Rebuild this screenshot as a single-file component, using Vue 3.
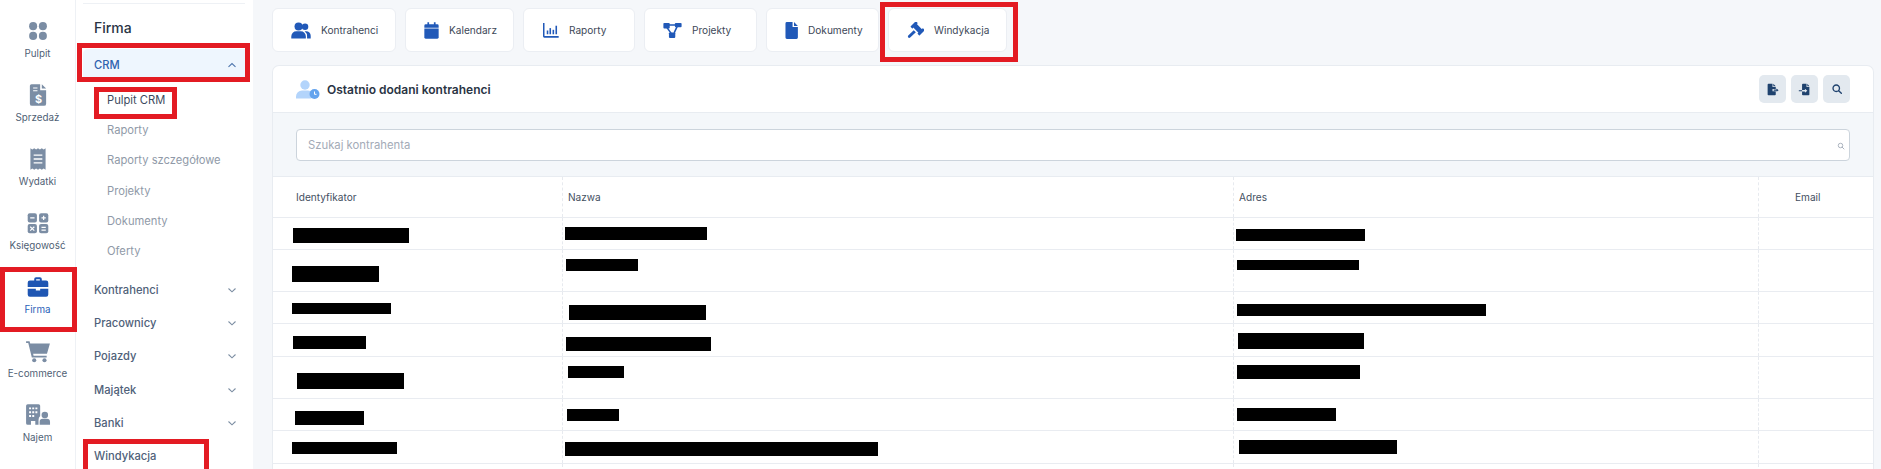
<script setup>
const railItems = [
  { label: 'Pulpit', icon: 'grid' },
  { label: 'Sprzedaż', icon: 'invoice' },
  { label: 'Wydatki', icon: 'receipt' },
  { label: 'Księgowość', icon: 'calc' },
  { label: 'Firma', icon: 'case', active: true },
  { label: 'E-commerce', icon: 'cart' },
  { label: 'Najem', icon: 'building' },
]
const subLinks = ['Pulpit CRM', 'Raporty', 'Raporty szczegółowe', 'Projekty', 'Dokumenty', 'Oferty']
const menu = ['Kontrahenci', 'Pracownicy', 'Pojazdy', 'Majątek', 'Banki']
const tabs = [
  { label: 'Kontrahenci', icon: 'people', w: 124, iw: 20, ih: 17, vb: '0 1 24 21' },
  { label: 'Kalendarz', icon: 'calendar', w: 109, iw: 15, ih: 17, vb: '1 0 22 24' },
  { label: 'Raporty', icon: 'chart', w: 112, iw: 17, ih: 15, vb: '0 1 24 22' },
  { label: 'Projekty', icon: 'nodes', w: 113, iw: 19, ih: 16, vb: '0 2 24 20' },
  { label: 'Dokumenty', icon: 'doc', w: 113, iw: 13, ih: 17, vb: '3 0 18 24' },
  { label: 'Windykacja', icon: 'gavel', w: 119, iw: 17, ih: 17, vb: '0 0 24 24' },
]
const colStarts = [273, 563, 1234]
const rowHeights = [32, 42, 32, 33, 42, 32, 33]
// redaction blocks: [x1, y1, x2, y2] in each column, per row
const blocks = [
  [[293, 228, 409, 243], [565, 227, 707, 240], [1236, 229, 1365, 241]],
  [[292, 266, 379, 282], [566, 259, 638, 271], [1237, 260, 1359, 270]],
  [[292, 303, 391, 314], [569, 305, 706, 320], [1237, 304, 1486, 316]],
  [[293, 336, 366, 349], [566, 337, 711, 351], [1238, 333, 1364, 349]],
  [[297, 373, 404, 389], [568, 366, 624, 378], [1237, 365, 1360, 379]],
  [[295, 411, 364, 425], [567, 409, 619, 421], [1237, 408, 1336, 421]],
  [[292, 442, 397, 454], [565, 442, 878, 456], [1239, 440, 1397, 454]],
]
let top = 218
const rows = rowHeights.map((h, r) => {
  const rowTop = top
  top += h
  return {
    h,
    cells: blocks[r].map((b, c) => ({
      left: b[0] - colStarts[c] + 'px',
      top: b[1] - rowTop + 'px',
      width: b[2] - b[0] + 'px',
      height: b[3] - b[1] + 'px',
    })),
  }
})
</script>

<template>
  <div class="app">
    <nav class="rail">
      <a v-for="item in railItems" :key="item.label" class="rail-item" :class="{ active: item.active }">
        <svg class="rail-icon" viewBox="0 0 24 24" fill="currentColor">
          <template v-if="item.icon === 'grid'">
            <circle cx="7.5" cy="7.5" r="3.7" /><circle cx="16.5" cy="7.5" r="3.7" />
            <circle cx="7.5" cy="16.5" r="3.7" /><circle cx="16.5" cy="16.5" r="3.7" />
          </template>
          <template v-else-if="item.icon === 'invoice'">
            <path d="M7 2h7v5.500h5.500V20a2 2 0 0 1-2 2h-11a2 2 0 0 1-2-2V3.500A1.500 1.500 0 0 1 6 2z" />
            <path d="M15.500 2l4 4h-4z" />
            <path d="M7.500 5.500h4M7.500 8h4" stroke="#fff" stroke-width="1" />
            <text x="12.500" y="19" font-size="10" font-weight="700" text-anchor="middle" fill="#fff" font-family="Inter, sans-serif">$</text>
          </template>
          <template v-else-if="item.icon === 'receipt'">
            <path d="M5 2l1.750 1.200 1.750-1.200 1.750 1.200 1.750-1.200 1.750 1.200 1.750-1.200 1.750 1.200 1.750-1.200v20l-1.750-1.200-1.750 1.200-1.750-1.200-1.750 1.200-1.750-1.200-1.750 1.200-1.750-1.200-1.750 1.200z" />
            <path d="M8 8.500h8M8 12h8M8 15.500h8" stroke="#fff" stroke-width="1.200" />
          </template>
          <template v-else-if="item.icon === 'calc'">
            <rect x="2.500" y="3" width="8.500" height="8.500" rx="1.800" /><rect x="13" y="3" width="8.500" height="8.500" rx="1.800" />
            <rect x="2.500" y="13" width="8.500" height="8.500" rx="1.800" /><rect x="13" y="13" width="8.500" height="8.500" rx="1.800" />
            <path d="M4.800 7.200h4M15.200 7.200h4M17.200 5.200v4M4.800 15.500l3.800 3.500M8.600 15.500l-3.800 3.500M15.200 16h4M15.200 18.500h4" stroke="#fff" stroke-width="1.100" />
          </template>
          <template v-else-if="item.icon === 'case'">
            <path d="M8.500 6V4.700A1.700 1.700 0 0 1 10.200 3h3.600a1.700 1.700 0 0 1 1.700 1.700V6h4A2 2 0 0 1 21.500 8v4H2.500V8a2 2 0 0 1 2-2zm1.800 0h3.400V4.800h-3.400z" />
            <path d="M2.500 13.500h7.500v1.700h4v-1.700h7.500V19a2 2 0 0 1-2 2h-15a2 2 0 0 1-2-2z" />
          </template>
          <template v-else-if="item.icon === 'cart'">
            <path d="M1 3h3.200l.6 2H23l-2.700 9.500H7.500l.4 1.800H20v1.700H6.300L3 4.700H1z" />
            <circle cx="8.500" cy="20.500" r="1.900" /><circle cx="18" cy="20.500" r="1.900" />
          </template>
          <template v-else-if="item.icon === 'building'">
            <path d="M1 3.500A1.500 1.500 0 0 1 2.500 2h10A1.500 1.500 0 0 1 14 3.500V13a4.500 4.500 0 0 0-1.500 3.500V21h-3v-3.500h-4V21h-3A1.500 1.500 0 0 1 1 19.500z" />
            <path d="M3.800 5h1.800v1.800H3.800zM6.700 5h1.800v1.800H6.700zM9.600 5h1.800v1.800H9.600zM3.800 8.500h1.800v1.800H3.800zM6.700 8.500h1.800v1.800H6.700zM9.600 8.500h1.800v1.800H9.600zM3.800 12h1.800v1.800H3.800zM6.700 12h1.800v1.800H6.700z" fill="#fff" />
            <circle cx="18.300" cy="12" r="3" />
            <path d="M13.500 21v-2.500a3 3 0 0 1 3-3h3.600a3 3 0 0 1 3 3V21z" />
          </template>
        </svg>
        <span class="rail-label">{{ item.label }}</span>
      </a>
    </nav>

    <aside class="side">
      <div class="side-top"></div>
      <h2 class="side-title">Firma</h2>
      <div class="menu-open">
        <span>CRM</span>
        <svg class="chev" viewBox="0 0 10 6"><path d="M1.500 4.800L5 1.500l3.500 3.300" /></svg>
      </div>
      <ul class="sub">
        <li v-for="(s, i) in subLinks" :key="s" :class="{ current: i === 0 }">{{ s }}</li>
      </ul>
      <ul class="menu">
        <li v-for="m in menu" :key="m">
          <span>{{ m }}</span>
          <svg class="chev" viewBox="0 0 10 6"><path d="M1.500 1.500L5 4.800l3.500-3.300" /></svg>
        </li>
        <li>Windykacja</li>
      </ul>
    </aside>

    <main class="main">
      <div class="tabs">
        <a v-for="t in tabs" :key="t.label" class="tab" :style="{ width: t.w + 'px' }">
          <svg :viewBox="t.vb" :style="{ width: t.iw + 'px', height: t.ih + 'px' }" fill="#2159b8">
            <template v-if="t.icon === 'people'">
              <circle cx="9" cy="6.500" r="5" />
              <circle cx="17" cy="6.800" r="4" />
              <path d="M0 21.500v-2.700A6.300 6.300 0 0 1 6.300 12.500h5.400a6.300 6.300 0 0 1 6.300 6.300v2.700z" />
              <path d="M16.500 12.500h2A5.500 5.500 0 0 1 24 18v3.500h-4.500v-2.700a8 8 0 0 0-3-6.300z" />
            </template>
            <template v-else-if="t.icon === 'calendar'">
              <path d="M6 0h2.500v3H15.500V0H18v3h2.500A2 2 0 0 1 22.500 5v3H1.500V5a2 2 0 0 1 2-2H6z" />
              <path d="M1.500 9h21v13a2 2 0 0 1-2 2h-17a2 2 0 0 1-2-2z" />
            </template>
            <template v-else-if="t.icon === 'chart'">
              <path d="M1 1h2.200v19H24v2.500H3a2 2 0 0 1-2-2z" />
              <rect x="6.500" y="12" width="2.300" height="5.500" /><rect x="10.500" y="8.500" width="2.300" height="9" />
              <rect x="15" y="11" width="2.300" height="6.500" /><rect x="19.300" y="5" width="2.300" height="12.500" />
            </template>
            <template v-else-if="t.icon === 'nodes'">
              <rect x="0.500" y="3" width="8" height="7" rx="1.200" /><rect x="15" y="3" width="8.500" height="5.500" rx="1.200" />
              <rect x="7.500" y="15" width="8" height="7" rx="1.200" />
              <path d="M7 4.700h10v2H7zM5.500 8l6 8.500-1.500 1-6-8.500z" />
              <path d="M19 7.500l-4 8.500-1.800-1 4-8.500z" />
            </template>
            <template v-else-if="t.icon === 'doc'">
              <path d="M5.500 0h8v7h7.500v15a2 2 0 0 1-2 2H5.500a2 2 0 0 1-2-2V2a2 2 0 0 1 2-2z" />
              <path d="M15.500 0l5.500 5.500h-5.500z" />
            </template>
            <template v-else-if="t.icon === 'gavel'">
              <g transform="rotate(45 15 9)">
                <rect x="7.500" y="5.500" width="15" height="7" />
                <rect x="6" y="3.500" width="4" height="11" rx=".8" />
                <rect x="20" y="3.500" width="4" height="11" rx=".8" />
              </g>
              <path d="M9.500 11.500l3 3-8 7.500a1.800 1.800 0 0 1-2.600-.1l-.2-.3a1.800 1.800 0 0 1 .1-2.500z" />
            </template>
          </svg>
          <span class="tab-label">{{ t.label }}</span>
        </a>
      </div>

      <section class="card">
        <header class="card-head">
          <svg class="head-icon" viewBox="0 0 24 19">
            <circle cx="9" cy="5" r="4.700" fill="#b3d4fb" />
            <path d="M0 18.500v-2a6 6 0 0 1 6-6h6a6 6 0 0 1 4 1.500 6 6 0 0 0-.5 6.500z" fill="#b3d4fb" />
            <circle cx="18.500" cy="14" r="5" fill="#64a4ee" />
            <path d="M18.500 11.500V14.300h2" fill="none" stroke="#fff" stroke-width="1" />
          </svg>
          <h3 class="card-title">Ostatnio dodani kontrahenci</h3>
          <div class="actions">
            <button class="act" type="button">
              <svg viewBox="0 0 16 16" fill="#1f426e"><path d="M3 1h5v4h4v2.500H8v2.500h4V14a1 1 0 0 1-1 1H3a1 1 0 0 1-1-1V2a1 1 0 0 1 1-1zM9 1l3 3H9zM9.500 8h3.500V6.700L15.500 8.800 13 10.900V9.500H9.500z" /></svg>
            </button>
            <button class="act" type="button">
              <svg viewBox="0 0 16 16" fill="#1f426e"><path d="M6 1h4.500v4H14v9a1 1 0 0 1-1 1H6a1 1 0 0 1-1-1v-3.500h3.500V12L11.500 9.500 8.500 7v1.500H5V2a1 1 0 0 1 1-1zM11.500 1L14 4h-2.500zM1 8.800h4v1.200H1z" /></svg>
            </button>
            <button class="act" type="button">
              <svg class="act-search" viewBox="0 0 16 16" fill="none" stroke="#1f426e" stroke-width="1.800"><circle cx="7" cy="7" r="4.300" /><path d="M10.200 10.200l3.600 3.600" stroke-linecap="round" /></svg>
            </button>
          </div>
        </header>

        <div class="search-band">
          <label class="search">
            <input type="text" placeholder="Szukaj kontrahenta" />
            <svg viewBox="0 0 16 16" fill="none" stroke="#a3acb8" stroke-width="1.800"><circle cx="7" cy="7" r="4.500" /><path d="M10.300 10.300l3.700 3.700" stroke-linecap="round" /></svg>
          </label>
        </div>

        <div class="table">
          <div class="tr th">
            <div class="td first">Identyfikator</div>
            <div class="td pad">Nazwa</div>
            <div class="td pad">Adres</div>
            <div class="td email">Email</div>
          </div>
          <div v-for="(row, r) in rows" :key="r" class="tr" :style="{ height: row.h + 'px' }">
            <div v-for="(c, i) in row.cells" :key="i" class="td">
              <span class="redact" :style="c"></span>
            </div>
            <div class="td"></div>
          </div>
          <div class="tr tail">
            <div class="td"></div><div class="td"></div><div class="td"></div><div class="td"></div>
          </div>
        </div>
      </section>
    </main>

    <i class="mark mark-crm"></i>
    <i class="mark mark-pulpit"></i>
    <i class="mark mark-firma"></i>
    <i class="mark mark-wind"></i>
    <i class="mark mark-tab"></i>
  </div>
</template>

<style>
html, body { margin: 0; height: 100%; overflow: hidden; background: #f5f7fa; }
</style>

<style scoped>
* { box-sizing: border-box; }
.app {
  position: relative;
  display: flex;
  width: 1881px;
  height: 469px;
  overflow: hidden;
  font-family: Inter, "Liberation Sans", sans-serif;
  background: #f5f7fa;
}
.rail {
  flex: 0 0 76px;
  padding-top: 12px;
  background: #fff;
  border-right: 1px solid #eef1f5;
}
.rail-item {
  display: flex;
  flex-direction: column;
  align-items: center;
  height: 64px;
  padding-top: 6px;
  color: #7b8da4;
}
.rail-item.active { color: #1f56b3; }
.rail-icon { width: 26px; height: 26px; }
.rail-label {
  margin-top: 2px;
  font-size: 9.800px;
  line-height: 16px;
  color: #4f5f75;
}
.active .rail-label { color: #2a62b8; }

.side {
  flex: 0 0 177px;
  padding: 3px 8px 0 7px;
  background: #fff;
}
.side-top { height: 1px; background: #eef1f5; }
.side-title {
  height: 45px;
  margin: 0;
  padding: 14px 0 0 11px;
  font-size: 14px;
  line-height: 20px;
  font-weight: 500;
  color: #2a3444;
}
.menu-open {
  display: flex;
  align-items: center;
  justify-content: space-between;
  height: 32px;
  padding: 0 8px 0 11px;
  border-radius: 5px 0 0 5px;
  background: #eef6fe;
  color: #2f62ae;
  font-size: 11.200px;
  font-weight: 500;
}
.chev { width: 10px; height: 6px; fill: none; stroke: #7d8ea3; stroke-width: 1.100; }
.menu-open .chev { stroke: #4e76ad; }
.sub {
  margin: 4px 0 0;
  padding: 0 0 0 24px;
  list-style: none;
}
.sub li {
  height: 30.200px;
  line-height: 30.200px;
  font-size: 11.200px;
  color: #909aa8;
  white-space: nowrap;
}
.sub li.current { color: #3d4a5e; }
.menu {
  margin: 7px 0 0;
  padding: 0 8px 0 11px;
  list-style: none;
}
.menu li {
  display: flex;
  align-items: center;
  justify-content: space-between;
  height: 33.300px;
  font-size: 11.200px;
  font-weight: 500;
  color: #4f6179;
}

.main {
  flex: 1;
  min-width: 0;
  padding: 8px 7px 0 19px;
}
.tabs { display: flex; gap: 9px; height: 44px; }
.tab {
  display: flex;
  align-items: center;
  gap: 10px;
  height: 44px;
  padding-left: 18px;
  background: #fff;
  border: 1px solid #ebeef3;
  border-radius: 6px;
}
.tab-label { font-size: 10.100px; color: #3d4858; }

.card {
  margin-top: 13px;
  background: #fff;
  border: 1px solid #e8ecf1;
  border-bottom: 0;
  border-radius: 7px 7px 0 0;
  height: 420px;
}
.card-head {
  display: flex;
  align-items: center;
  height: 47px;
  padding: 0 23px;
  border-bottom: 1px solid #e8ecf1;
}
.head-icon { width: 24px; height: 19px; margin-right: 7px; }
.card-title {
  margin: 0;
  font-size: 12px;
  font-weight: 600;
  color: #2a3444;
}
.actions { display: flex; gap: 5px; margin-left: auto; }
.act {
  display: flex;
  align-items: center;
  justify-content: center;
  width: 27px;
  height: 28px;
  padding: 0;
  border: 0;
  border-radius: 5px;
  background: #e3e9ef;
}
.act svg { width: 13px; height: 13px; }
.act svg.act-search { width: 12px; height: 12px; }

.search-band {
  height: 64px;
  padding: 16px 23px 0;
  background: #f4f7fa;
  border-bottom: 1px solid #e8ecf1;
}
.search { position: relative; display: block; }
.search input {
  display: block;
  width: 100%;
  height: 32px;
  padding: 0 11px;
  background: #fff;
  border: 1px solid #ccd4dc;
  border-radius: 4px;
  font-family: inherit;
  font-size: 11.300px;
  color: #3d4858;
  outline: none;
}
.search input::placeholder { color: #a3abb7; opacity: 1; }
.search svg { position: absolute; right: 5px; top: 13px; width: 8px; height: 8px; }

.tr {
  display: grid;
  grid-template-columns: 290px 671px 525px 114px;
  border-bottom: 1px solid #e9ecf1;
}
.tr.th { height: 41px; font-size: 10.100px; color: #444f5f; }
.tr.tail { height: 20px; border-bottom: 0; }
.td { position: relative; border-right: 1px dashed #e7eaef; }
.td:last-child { border-right: 0; }
.th .td { display: flex; align-items: center; padding-left: 5px; }
.th .td.first { padding-left: 23px; }
.th .td.email { padding-left: 36px; }
.redact { position: absolute; background: #000; }

.mark { position: absolute; border: 5px solid #e31b23; pointer-events: none; }
.mark-crm { left: 77px; top: 43px; width: 173px; height: 39px; }
.mark-pulpit { left: 94px; top: 87px; width: 83px; height: 32px; }
.mark-firma { left: 0; top: 267px; width: 77px; height: 65px; }
.mark-wind { left: 83px; top: 439px; width: 126px; height: 50px; }
.mark-tab { left: 880px; top: 2px; width: 138px; height: 60px; }
</style>
